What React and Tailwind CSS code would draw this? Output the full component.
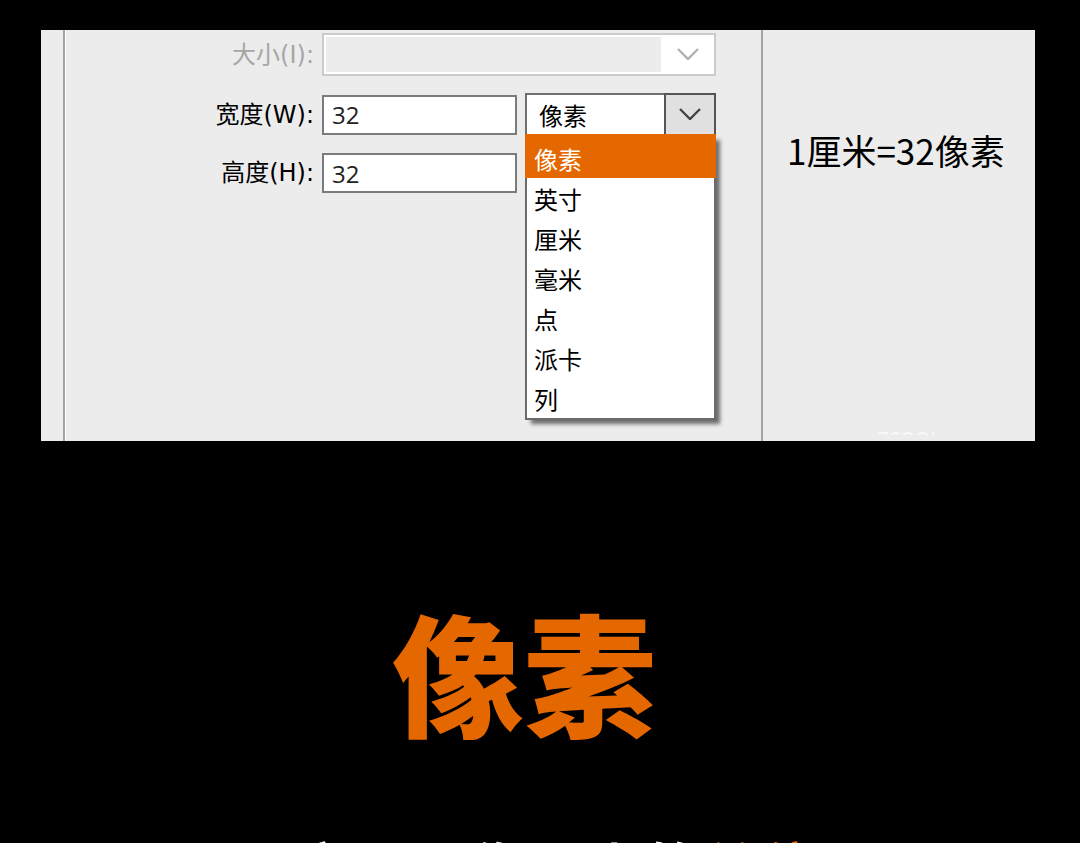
import { useState } from 'react'
import clsx from 'clsx'

const UNITS = ['像素', '英寸', '厘米', '毫米', '点', '派卡', '列']

const LABEL = "text-right font-['DejaVu_Sans','Noto_Sans_CJK_SC',sans-serif] leading-9"

function Chevron({ className }) {
  return (
    <svg viewBox="0 0 22 12" className={clsx('w-[22px] h-3 fill-none', className)} strokeWidth="2.4" aria-hidden="true">
      <path d="M1 1 L11 11 L21 1" />
    </svg>
  )
}

function SizeField({ id, label, value, onChange }) {
  return (
    <>
      <label htmlFor={id} className={clsx(LABEL, 'text-black')}>{label}</label>
      <input
        id={id}
        value={value}
        onChange={e => onChange(e.target.value)}
        className="h-10 w-full min-w-0 border-2 border-[#7b7b7b] bg-white px-2 text-[#222] outline-none"
      />
    </>
  )
}

function UnitSelect({ unit, onChange }) {
  return (
    <div className="relative h-[43px]">
      <select
        aria-label="单位"
        value={unit}
        onChange={e => onChange(e.target.value)}
        className="h-full w-full appearance-none border-2 border-[#6f6f6f] bg-white pt-0.5 pl-3 text-black outline-none"
      >
        {UNITS.map(u => <option key={u}>{u}</option>)}
      </select>
      <span className="pointer-events-none absolute inset-y-0 right-0 flex w-[52px] items-center justify-center border-2 border-[#555] bg-[#e0e0e0] pb-0.5">
        <Chevron className="stroke-[#444]" />
      </span>

      {/* Open list */}
      <ul
        role="listbox"
        aria-label="单位"
        className="absolute inset-x-0 top-[41px] z-10 border-2 border-t-0 border-[#6b6b6b] bg-white shadow-[5px_5px_4px_-1px_rgba(0,0,0,0.55)]"
      >
        {UNITS.map(u => (
          <li
            key={u}
            role="option"
            aria-selected={u === unit}
            onClick={() => onChange(u)}
            className={clsx('px-[7px]', u === unit ? '-mx-0.5 h-11 bg-[#e56700] pl-[9px] leading-[52px] text-white' : 'h-10 leading-[44px] text-black')}
          >
            {u}
          </li>
        ))}
      </ul>
    </div>
  )
}

export default function App() {
  const [width, setWidth] = useState('32')
  const [height, setHeight] = useState('32')
  const [unit, setUnit] = useState('像素')

  return (
    <main className="h-screen overflow-hidden bg-black pt-[30px] font-['Noto_Sans_CJK_SC',sans-serif]">
      <section className="relative mr-[45px] ml-[41px] flex h-[411px] bg-[#ececec]">
        <div className="w-6 shrink-0 border-r-2 border-[#a3a3a3]" />

        <form className="flex-1 border-r-2 border-l border-r-[#a3a3a3] border-l-white pt-[3px] pr-[45px] font-['Open_Sans','Noto_Sans_CJK_SC',sans-serif] text-2xl">
          <div className="grid grid-cols-[1fr_195px_191px] items-center gap-x-2 gap-y-[17px]">
            <label htmlFor="preset" className={clsx(LABEL, 'text-[#a6a6a6]')}>大小(I):</label>
            <div className="relative col-span-2 h-[43px]">
              <select id="preset" disabled className="h-full w-full appearance-none border-2 border-[#cbcbcb] bg-[#ececec] opacity-100 ring-2 ring-white ring-inset" />
              <span className="pointer-events-none absolute inset-y-0.5 right-0.5 flex w-[53px] items-center justify-center bg-white pb-0.5">
                <Chevron className="stroke-[#b0b0b0]" />
              </span>
            </div>

            <SizeField id="width" label="宽度(W):" value={width} onChange={setWidth} />
            <UnitSelect unit={unit} onChange={setUnit} />

            <SizeField id="height" label="高度(H):" value={height} onChange={setHeight} />
          </div>
        </form>

        <div className="w-[272px] shrink-0 pt-24 pl-6">
          <p className="text-[35px] leading-[48px] whitespace-nowrap text-black">1厘米=32像素</p>
        </div>

        {/* Faint mark by the lower edge */}
        <span className="absolute right-[94px] bottom-1.5 h-1 overflow-hidden text-xl leading-4 text-white/70" aria-hidden="true">ZCOOL</span>
      </section>

      <h1 className="mt-[131px] mr-[32px] text-center text-[132px] leading-[196px] font-black text-[#e56700]">
        像素
      </h1>

      <p className="mt-[66px] ml-8 text-center text-[58px] leading-[64px] font-medium whitespace-nowrap text-white">
        它是图像最小的<span className="text-[#e56700]">单位</span>
      </p>
    </main>
  )
}
